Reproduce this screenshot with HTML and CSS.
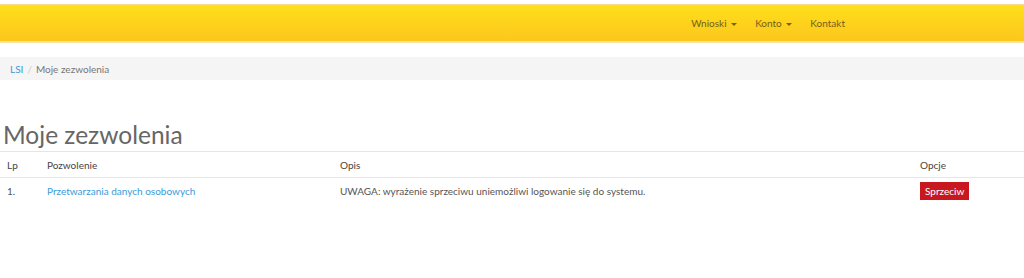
FILE: index.html
```html
<!DOCTYPE html>
<html lang="pl">
<head>
    <meta charset="UTF-8">
    <meta name="viewport" content="width=device-width, initial-scale=1.0">
    <title>Moje zezwolenia</title>
    <link rel="stylesheet" href="styles.css">
</head>
<body>
    <nav class="navbar">
        <ul class="nav-links">
            <li><a href="#">Wnioski <span class="caret"></span></a></li>
            <li><a href="#">Konto <span class="caret"></span></a></li>
            <li><a href="#">Kontakt</a></li>
        </ul>
    </nav>

    <ol class="breadcrumb">
        <li><a href="#">LSI</a></li>
        <li class="active">Moje zezwolenia</li>
    </ol>

    <h1 class="page-title">Moje zezwolenia</h1>

    <table class="table">
        <thead>
            <tr>
                <th class="col-lp">Lp</th>
                <th class="col-name">Pozwolenie</th>
                <th class="col-desc">Opis</th>
                <th class="col-opt">Opcje</th>
            </tr>
        </thead>
        <tbody>
            <tr>
                <td>1.</td>
                <td><a href="#">Przetwarzania danych osobowych</a></td>
                <td>UWAGA: wyrażenie sprzeciwu uniemożliwi logowanie się do systemu.</td>
                <td><button class="btn btn-danger">Sprzeciw</button></td>
            </tr>
        </tbody>
    </table>
</body>
</html>
```

FILE: styles.css
```css
body {
    margin: 0;
    font-family: Lato, "Open Sans", sans-serif;
    font-size: 10px;
    color: #333;
    background: #fff;
}

a {
    color: #3a9ad9;
    text-decoration: none;
}

.navbar {
    margin-top: 4px;
    height: 36px;
    border-top: 1px solid #fbd98c;
    border-bottom: 2px solid #fde3a6;
    background: linear-gradient(to bottom, #ffdf1a, #fcc61e);
    display: flex;
    justify-content: flex-end;
    align-items: center;
    padding-right: 179px;
}

.nav-links {
    list-style: none;
    margin: 0;
    padding: 0;
    display: flex;
    gap: 18px;
}

.nav-links a {
    color: #76601a;
    font-size: 10px;
}

.caret {
    display: inline-block;
    width: 0;
    height: 0;
    margin-left: 2px;
    vertical-align: middle;
    border-top: 3px solid #76601a;
    border-left: 3px solid transparent;
    border-right: 3px solid transparent;
}

.breadcrumb {
    list-style: none;
    margin: 14px 0 0;
    padding: 0 10px;
    height: 23px;
    background: #f5f5f5;
    display: flex;
    align-items: center;
    color: #777;
}

.breadcrumb li + li::before {
    content: "/";
    color: #ccc;
    padding: 0 4px;
}

.page-title {
    margin: 39px 0 0 3px;
    font-weight: 400;
    font-size: 24.5px;
    line-height: 31px;
    color: #666;
}

.table {
    width: 100%;
    border-collapse: collapse;
    margin-top: 1px;
}

.table th,
.table td {
    text-align: left;
    padding: 0 7px;
    height: 25px;
    border-top: 1px solid #e6e6e6;
}

.table th {
    font-weight: 400;
    color: #444;
}

.table td {
    color: #555;
}

.col-lp { width: 26px; }
.col-name { width: 279px; }
.col-desc { width: 566px; }

.btn {
    border: none;
    border-radius: 0;
    font-family: inherit;
    font-size: 10px;
    padding: 3px 5px;
    color: #fff;
}

.btn-danger {
    background: #c9171f;
}
```
